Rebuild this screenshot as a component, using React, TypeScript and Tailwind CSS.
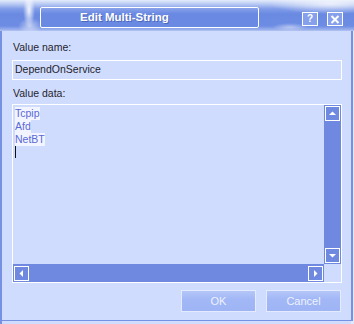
import React from "react";

const font = { fontFamily: '"Liberation Sans", Arial, sans-serif' };

function ScrollBtn({ dir }: { dir: "up" | "down" | "left" | "right" }) {
  const pts: Record<string, string> = {
    up: "4,9 7.5,5.5 11,9",
    down: "4,6 7.5,9.5 11,6",
    left: "9,4 5.5,7.5 9,11",
    right: "6,4 9.5,7.5 6,11",
  };
  return (
    <div className="w-[15px] h-[15px] border border-white bg-[#6e89df] flex items-center justify-center">
      <svg width="13" height="13" viewBox="1 1 13 13">
        <polygon points={pts[dir]} fill="white" />
      </svg>
    </div>
  );
}

export default function App() {
  return (
    <div
      className="w-[354px] h-[324px] bg-[#d0dcfd] flex flex-col relative overflow-hidden"
      style={font}
    >
      {/* Title bar */}
      <div className="h-[31px] relative bg-[linear-gradient(to_bottom,#e4ebfb_0px,#b9caf3_4px,#7f9be8_9px,#6a8ae2_14px,#6d8ce3_26px,#9fb4ee_30px,#b7c7f2_31px)] shrink-0">
        <div className="absolute inset-0 bg-[radial-gradient(ellipse_6px_18px_at_29px_10px,rgba(255,255,255,0.9),rgba(255,255,255,0)_100%)]" />
        <div className="absolute inset-0 bg-[radial-gradient(ellipse_12px_8px_at_30px_26px,rgba(255,255,255,0.55),rgba(255,255,255,0)_100%)]" />
        <div className="absolute inset-0 bg-[radial-gradient(ellipse_60px_10px_at_330px_4px,rgba(255,255,255,0.7),rgba(255,255,255,0)_100%)]" />
        <div className="absolute inset-0 bg-[radial-gradient(ellipse_18px_4px_at_290px_27px,rgba(255,255,255,0.45),rgba(255,255,255,0)_100%)]" />
        <div className="absolute left-[40px] top-[7px] w-[219px] h-[21px] border border-white rounded-[2px] bg-[linear-gradient(to_bottom,#8aa3ea,#6a89e2_30%,#6a89e2)] flex items-center">
          <span className="pl-[39px] text-white font-bold text-[11.5px] [text-shadow:1px_1px_0_rgba(60,80,160,0.6)]">
            Edit Multi-String
          </span>
        </div>
        <div className="absolute left-[302px] top-[12px] w-[16px] h-[14px] border border-white bg-[#86a0ec] flex items-center justify-center text-white font-bold text-[10px] leading-none">
          ?
        </div>
        <div className="absolute left-[327px] top-[12px] w-[16px] h-[14px] border border-white bg-[#86a0ec] flex items-center justify-center">
          <svg width="10" height="9" viewBox="0 0 10 9">
            <path d="M1.5 1 L8.5 8 M8.5 1 L1.5 8" stroke="white" strokeWidth="2" />
          </svg>
        </div>
      </div>

      {/* Body */}
      <div className="flex-1 flex flex-col pl-[12px] pr-[12px] border-l-2 border-l-[#7690e2] border-r-[3px] border-r-[#e2e9fe] relative">
        <div className="absolute right-[-2px] top-0 bottom-[3px] w-[2px] bg-[#7690e2]" />
        <div className="pt-[10px] text-[10.5px] leading-[13px] text-[#1e1e2e] -ml-[1px]">Value name:</div>
        <div className="mt-[6px] h-[20px] w-[330px] -ml-[2px] border border-white flex items-center pl-[2px] text-[10.5px] text-[#1e1e2e]">
          DependOnService
        </div>
        <div className="mt-[7px] text-[10.5px] leading-[13px] text-[#1e1e2e] -ml-[1px]">Value data:</div>
        <div className="mt-[4px] h-[179px] w-[330px] -ml-[2px] border border-white flex flex-col">
          <div className="flex flex-1">
            <div className="flex-1 pl-[2px] pt-[2px] text-[10.5px] leading-[13px] text-[#5a69d8] flex flex-col items-start">
              <span className="bg-[#f2f5ff] leading-[13px]">Tcpip</span>
              <span className="bg-[#f2f5ff] leading-[13px]">Afd</span>
              <span className="bg-[#f2f5ff] leading-[13px]">NetBT</span>
              <span className="mt-[0px] w-[1px] h-[12px] bg-[#111]" />
            </div>
            <div className="w-[17px] bg-[#6e89df] flex flex-col justify-between items-center py-[1px]">
              <ScrollBtn dir="up" />
              <ScrollBtn dir="down" />
            </div>
          </div>
          <div className="flex h-[18px]">
            <div className="flex-1 bg-[#6e89df] flex justify-between items-center px-[1px]">
              <ScrollBtn dir="left" />
              <ScrollBtn dir="right" />
            </div>
            <div className="w-[17px]" />
          </div>
        </div>
        <div className="mt-[7px] flex justify-end gap-[10px] -mr-[2px]">
          <div className="w-[75px] h-[22px] border border-[#e4ebff] bg-[linear-gradient(to_bottom,#b5c6f8,#a2b8f6_40%,#9eb4f4)] flex items-center justify-center text-[11px] text-[#eef2ff]">
            OK
          </div>
          <div className="w-[75px] h-[22px] border border-[#e4ebff] bg-[linear-gradient(to_bottom,#b5c6f8,#a2b8f6_40%,#9eb4f4)] flex items-center justify-center text-[11px] text-[#eef2ff]">
            Cancel
          </div>
        </div>
        <div className="flex-1" />
        <div className="h-[1px] bg-[#7690e2] -ml-[14px] -mr-[13px]" />
        <div className="h-[3px]" />
      </div>
    </div>
  );
}
